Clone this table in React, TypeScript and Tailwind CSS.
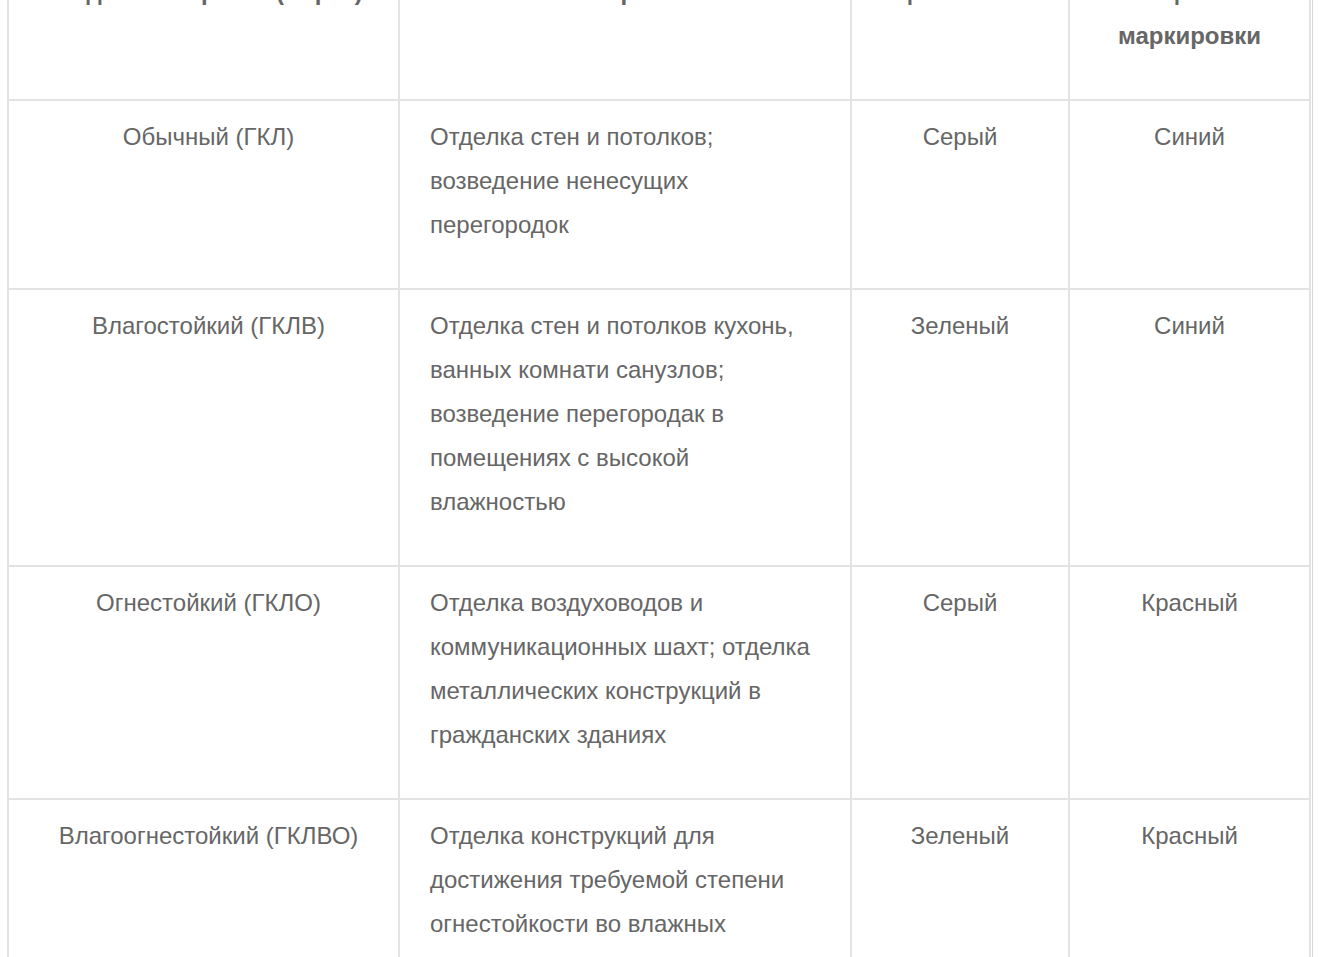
const rows = [
  {
    type: "Обычный (ГКЛ)",
    use: "Отделка стен и потолков; возведение ненесущих перегородок",
    sheet: "Серый",
    mark: "Синий",
  },
  {
    type: "Влагостойкий (ГКЛВ)",
    use: "Отделка стен и потолков кухонь, ванных комнати санузлов; возведение перегородак в помещениях с высокой влажностью",
    sheet: "Зеленый",
    mark: "Синий",
  },
  {
    type: "Огнестойкий (ГКЛО)",
    use: "Отделка воздуховодов и коммуникационных шахт; отделка металлических конструкций в гражданских зданиях",
    sheet: "Серый",
    mark: "Красный",
  },
  {
    type: "Влагоогнестойкий (ГКЛВО)",
    use: "Отделка конструкций для достижения требуемой степени огнестойкости во влажных помещениях",
    sheet: "Зеленый",
    mark: "Красный",
  },
];

const cell = "border-l-2 border-t-2 border-[#e3e3e3] pt-[14px] pb-[41px]";

const App = () => {
  return (
    <div
      className="min-h-screen overflow-hidden bg-white text-[24px] leading-[44px] text-[#666]"
      style={{ fontFamily: '"Liberation Sans", Arial, sans-serif' }}
    >
      <div className="-mt-[46px] ml-[7px] w-[1306px] border-r border-[#d6d6d6] pr-[1px]">
        <div className="grid grid-cols-[391px_452px_218px_241px] border-r-2 border-[#e3e3e3]">
          {/* Шапка таблицы */}
          <div className={`${cell} pl-[30px] pr-[20px] text-center font-bold`}>
            Вид гипсокартона (марка)
          </div>
          <div className={`${cell} px-[20px] text-center font-bold`}>
            Область применения
          </div>
          <div className={`${cell} px-[20px] text-center font-bold`}>
            Цвет листа
          </div>
          <div className={`${cell} px-[20px] text-center font-bold`}>
            Цвет
            <br />
            маркировки
          </div>

          {rows.map((r) => (
            <div key={r.type} className="contents">
              <div className={`${cell} pl-[30px] pr-[20px] text-center`}>{r.type}</div>
              <div className={`${cell} pl-[30px] pr-[40px]`}>{r.use}</div>
              <div className={`${cell} px-[20px] text-center`}>{r.sheet}</div>
              <div className={`${cell} px-[20px] text-center`}>{r.mark}</div>
            </div>
          ))}
        </div>
      </div>
    </div>
  );
};

export default App;
